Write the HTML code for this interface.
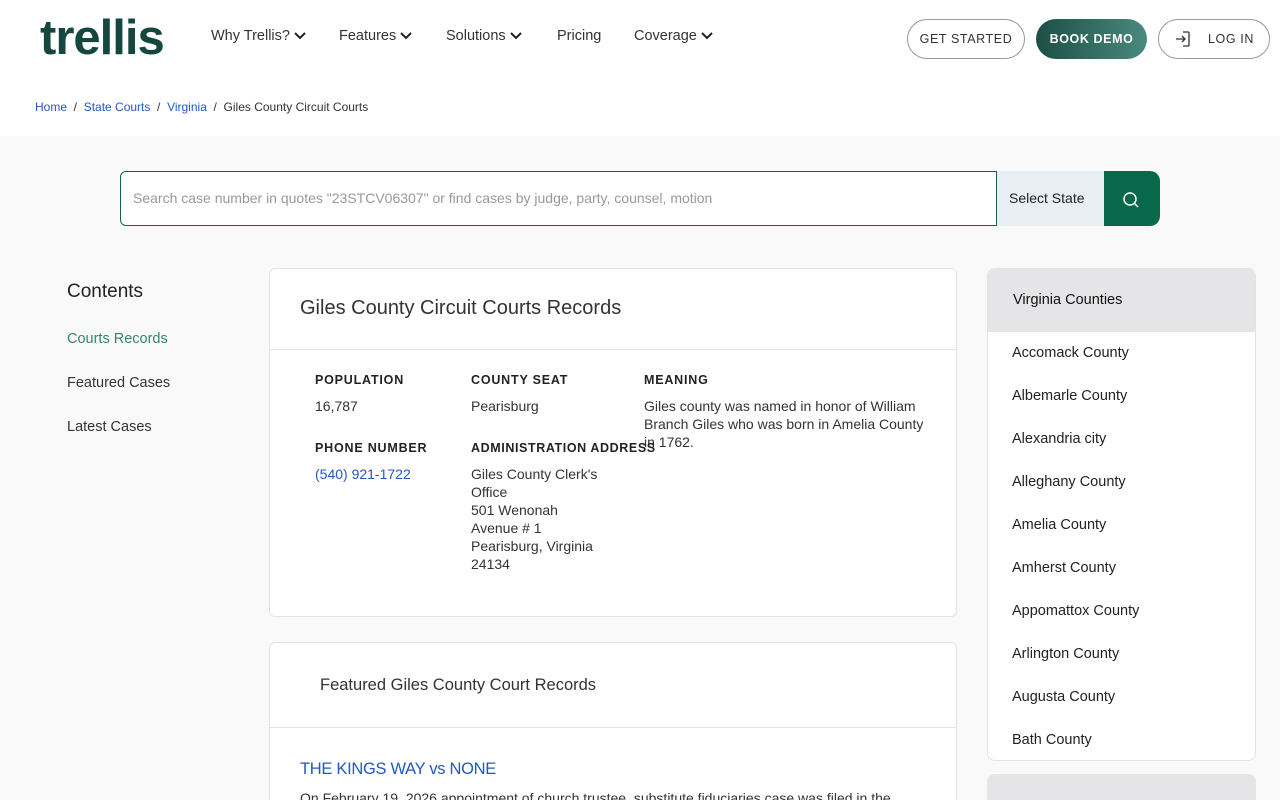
<!DOCTYPE html>
<html><head><meta charset="utf-8"><style>
*{box-sizing:border-box;margin:0;padding:0}
html,body{width:1280px;height:800px;overflow:hidden}
body{background:#f9f9fa;font-family:"Liberation Sans",sans-serif;color:#333;position:relative}
.abs{position:absolute}
header{position:absolute;left:0;top:0;width:1280px;height:78px;background:#fff;box-shadow:0 1px 4px rgba(0,0,0,.06)}
.logo{left:40px;top:10px;font-size:49px;font-weight:bold;color:#16473f;letter-spacing:-1px}
.nav{top:28px;font-size:14.5px;color:#333}
.nav svg{vertical-align:middle;margin-left:3px}
.btn{top:19px;height:40px;border-radius:20px;font-size:12.5px;letter-spacing:.6px;display:flex;align-items:center;justify-content:center;font-weight:bold}
.crumb{left:0;top:78px;width:1280px;height:58px;background:#fff;font-size:12px;padding:22px 35px;color:#333}
.crumb a{color:#2457c5;text-decoration:none}
.card{background:#fff;border:1px solid #e3e3e3;border-radius:6px}
.lbl{font-size:12.5px;font-weight:bold;letter-spacing:.8px;color:#222}
.val{font-size:14px;line-height:18px;color:#333}
.county{left:1012px;font-size:14.5px;color:#222}
</style></head><body>
<header>
<div class="abs logo">trellis</div>
<div class="abs nav" style="left:211px">Why Trellis?<svg width="14" height="10" viewBox="0 0 14 10"><path d="M2 2l5 5 5-5" stroke="#222" stroke-width="2" fill="none"/></svg></div>
<div class="abs nav" style="left:339px">Features<svg width="14" height="10" viewBox="0 0 14 10"><path d="M2 2l5 5 5-5" stroke="#222" stroke-width="2" fill="none"/></svg></div>
<div class="abs nav" style="left:446px">Solutions<svg width="14" height="10" viewBox="0 0 14 10"><path d="M2 2l5 5 5-5" stroke="#222" stroke-width="2" fill="none"/></svg></div>
<div class="abs nav" style="left:557px">Pricing</div>
<div class="abs nav" style="left:634px">Coverage<svg width="14" height="10" viewBox="0 0 14 10"><path d="M2 2l5 5 5-5" stroke="#222" stroke-width="2" fill="none"/></svg></div>
<div class="abs btn" style="left:907px;width:118px;border:1px solid #999;color:#333;font-weight:normal">GET STARTED</div>
<div class="abs btn" style="left:1036px;width:111px;background:linear-gradient(90deg,#1c4f45,#4a8a7c);color:#fff">BOOK DEMO</div>
<div class="abs btn" style="left:1158px;width:112px;border:1px solid #999;color:#333;font-weight:normal"><svg width="18" height="18" viewBox="0 0 18 18" style="margin-right:16px"><path d="M9 2h5a1 1 0 0 1 1 1v12a1 1 0 0 1-1 1H9M2 9h9M8 6l3 3-3 3" stroke="#333" stroke-width="1.3" fill="none"/></svg>LOG IN</div>
</header>
<div class="abs crumb"><a>Home</a> &nbsp;/&nbsp; <a>State Courts</a> &nbsp;/&nbsp; <a>Virginia</a> &nbsp;/&nbsp; Giles County Circuit Courts</div>
<div class="abs" style="left:120px;top:171px;width:877px;height:55px;background:#fff;border:1px solid #1d5e52;border-radius:6px 0 0 6px;font-size:14px;color:#999;padding:18px 12px">Search case number in quotes "23STCV06307" or find cases by judge, party, counsel, motion</div>
<div class="abs" style="left:997px;top:171px;width:107px;height:55px;background:#e8eef4;font-size:14px;color:#222;padding:19px 12px">Select State</div>
<div class="abs" style="left:1104px;top:171px;width:56px;height:55px;background:#07694a;border-radius:0 10px 10px 0"><svg width="56" height="55" viewBox="0 0 56 55"><circle cx="26" cy="28" r="6" stroke="#fff" stroke-width="1.5" fill="none"/><path d="M30.5 32.5l3.5 3.5" stroke="#fff" stroke-width="1.5"/></svg></div>
<div class="abs" style="left:67px;top:281px;font-size:19px;color:#222">Contents</div>
<div class="abs" style="left:67px;top:331px;font-size:14.5px;color:#2f8a63">Courts Records</div>
<div class="abs" style="left:67px;top:375px;font-size:14.5px;color:#333">Featured Cases</div>
<div class="abs" style="left:67px;top:419px;font-size:14.5px;color:#333">Latest Cases</div>
<div class="abs card" style="left:269px;top:268px;width:688px;height:349px"></div>
<div class="abs" style="left:300px;top:297px;font-size:20px;color:#333">Giles County Circuit Courts Records</div>
<div class="abs" style="left:270px;top:349px;width:686px;height:1px;background:#e3e3e3"></div>
<div class="abs lbl" style="left:315px;top:373px">POPULATION</div>
<div class="abs val" style="left:315px;top:397px">16,787</div>
<div class="abs lbl" style="left:471px;top:373px">COUNTY SEAT</div>
<div class="abs val" style="left:471px;top:397px">Pearisburg</div>
<div class="abs lbl" style="left:644px;top:373px">MEANING</div>
<div class="abs val" style="left:644px;top:397px;width:290px">Giles county was named in honor of William Branch Giles who was born in Amelia County in 1762.</div>
<div class="abs lbl" style="left:315px;top:441px">PHONE NUMBER</div>
<div class="abs val" style="left:315px;top:465px;color:#2457c5">(540) 921-1722</div>
<div class="abs lbl" style="left:471px;top:441px;letter-spacing:.6px">ADMINISTRATION ADDRESS</div>
<div class="abs val" style="left:471px;top:465px;width:130px">Giles County Clerk's Office<br>501 Wenonah Avenue # 1<br>Pearisburg, Virginia 24134</div>
<div class="abs card" style="left:269px;top:642px;width:688px;height:170px"></div>
<div class="abs" style="left:320px;top:676px;font-size:16.5px;color:#333">Featured Giles County Court Records</div>
<div class="abs" style="left:270px;top:727px;width:686px;height:1px;background:#e3e3e3"></div>
<div class="abs" style="left:300px;top:760px;font-size:16.5px;color:#2457c5;letter-spacing:-.3px">THE KINGS WAY vs NONE</div>
<div class="abs" style="left:300px;top:790px;font-size:14px;color:#333;white-space:nowrap">On February 19, 2026 appointment of church trustee, substitute fiduciaries case was filed in the</div>
<div class="abs card" style="left:987px;top:268px;width:269px;height:493px;border-radius:8px;overflow:hidden"><div style="height:63px;background:#e5e5e7"></div></div>
<div class="abs" style="left:1013px;top:292px;font-size:14.5px;color:#111">Virginia Counties</div>
<div class="abs county" style="top:345px">Accomack County</div>
<div class="abs county" style="top:388px">Albemarle County</div>
<div class="abs county" style="top:431px">Alexandria city</div>
<div class="abs county" style="top:474px">Alleghany County</div>
<div class="abs county" style="top:517px">Amelia County</div>
<div class="abs county" style="top:560px">Amherst County</div>
<div class="abs county" style="top:603px">Appomattox County</div>
<div class="abs county" style="top:646px">Arlington County</div>
<div class="abs county" style="top:689px">Augusta County</div>
<div class="abs county" style="top:732px">Bath County</div>
<div class="abs" style="left:987px;top:774px;width:269px;height:40px;background:#e5e5e7;border-radius:8px"></div>
</body></html>
